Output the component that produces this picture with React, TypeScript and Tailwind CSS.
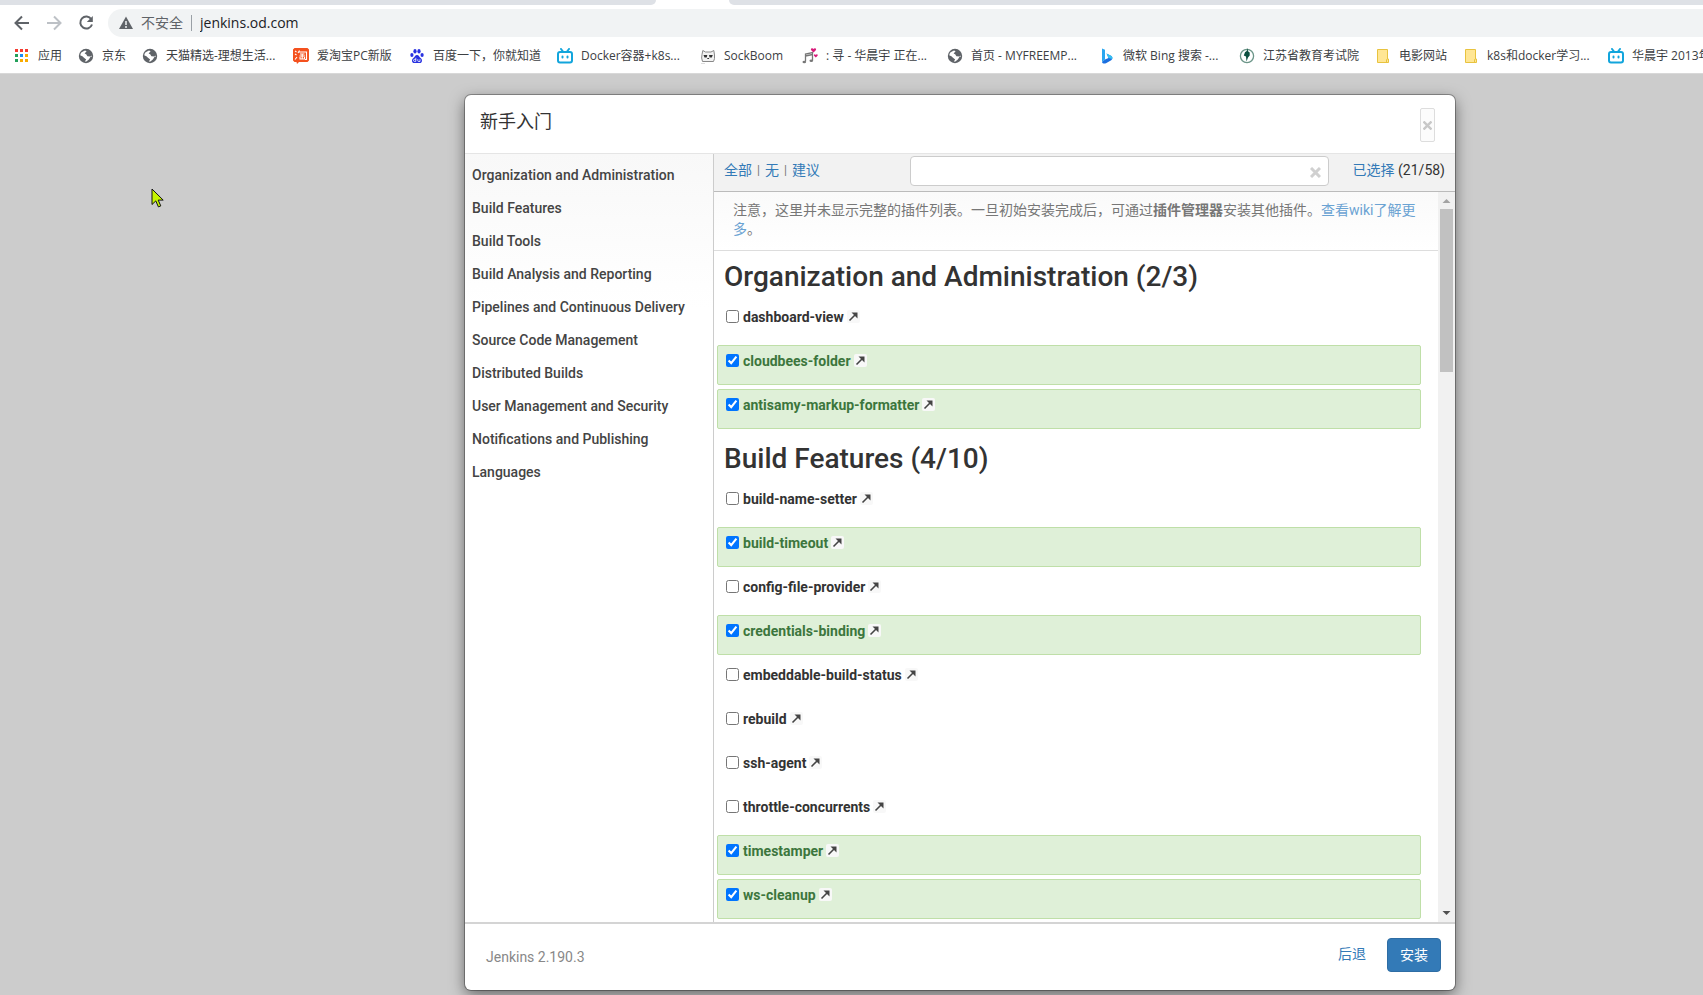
import { useState } from "react";
import type { ReactNode } from "react";
import clsx from "clsx";

const Globe = () => (
  <svg viewBox="0 0 16 16" className="size-4">
    <circle cx="8" cy="8" r="7.2" fill="#5f6368" />
    <path
      d="M8.6 3.2 6.6 5.4 8.2 6.2 9.4 8.2 12.6 8.4 13.6 7.4 13.9 8.6 12.4 9 10.8 11.4 8.4 13.6 6.8 13.4 8.2 11.4 6 9.8 4.4 8.2 2.2 7.2 3 4.8 5 3.6 7 2.4Z"
      fill="#fff"
    />
  </svg>
);

const Apps = () => {
  const colors = ["#f43b30", "#f43b30", "#f43b30", "#22a05a", "#1a8cf4", "#f9ab00", "#22a05a", "#f9ab00", "#f9ab00"];
  return (
    <svg viewBox="0 0 16 16" className="size-4" shapeRendering="crispEdges">
      {colors.map((c, i) => (
        <rect key={i} x={1 + (i % 3) * 5} y={1 + Math.floor(i / 3) * 5} width="3" height="3" fill={c} />
      ))}
    </svg>
  );
};

const Taobao = () => (
  <svg viewBox="0 0 16 16" className="size-4">
    <path d="M1.500 0h13L16 1.500v11L14.500 14H6l-2 2-.5-2h-2L0 12.500v-11Z" fill="#f4511e" />
    <path
      d="M2 3l1.500 1M2 6l1.500 1M2 11.500l2-2.500M6.500 2.500 5 5M6 4h7.500v7.500H12M7 6h4.500M6.500 8h5.500M9.200 6v4.800M7 9v2h4.500V9"
      stroke="#fff"
      strokeWidth="1.100"
      fill="none"
    />
  </svg>
);

const Baidu = () => (
  <svg viewBox="0 0 16 16" className="size-4" fill="#2932e1">
    <ellipse cx="2.900" cy="7" rx="1.600" ry="2" />
    <ellipse cx="6" cy="3.300" rx="1.600" ry="2.200" />
    <ellipse cx="10" cy="3.300" rx="1.600" ry="2.200" />
    <ellipse cx="13.100" cy="7" rx="1.600" ry="2" />
    <path d="M8 7C6 7 5.800 9 4.200 10.200 2.400 11.500 2.600 15 5.200 15h5.600c2.600 0 2.800-3.500 1-4.800C10.200 9 10 7 8 7Z" />
    <path d="M6.800 9.800v3.600H5.400c-1.200 0-1.200-2 0-2h1.400M8.800 11.200v1.600c0 .6.4.7 1 .7h1.200v-2.300" stroke="#fff" strokeWidth=".8" fill="none" />
  </svg>
);

const Bilibili = () => (
  <svg viewBox="0 0 16 16" className="size-4" fill="none" stroke="#12a5dc" strokeWidth="2" strokeLinecap="round">
    <rect x="1" y="4" width="14" height="10.500" rx="2" />
    <path d="M4 1 6 3.500M12 1 10 3.500M5.500 8.500v1M10.500 8.500v1" />
  </svg>
);

const Sock = () => (
  <svg viewBox="0 0 16 16" className="size-4" stroke="#888" fill="none">
    <path d="M2.500 13.500Q1 10 2 6.500L2.800 2.500 5.500 4h5.500L13.800 2.500 14.500 7Q15 11 13.500 13.500Z" fill="#f2f2f2" />
    <path d="M3.500 7h3.800l-.6 2.500H4.500ZM9 7h3.800l-1 2.500H9.600Z" fill="#333" stroke="none" />
    <path d="M7.300 10.500h1.800" stroke="#333" />
    <path d="M1 15.500h4" stroke="#ddd" />
  </svg>
);

const Music = () => (
  <svg viewBox="0 0 16 16" className="size-4">
    <path d="M3.500 13.500V6l7-1.500V12.500M3.500 8l7-1.500" stroke="#777" strokeWidth="1.300" fill="none" />
    <ellipse cx="2.300" cy="14" rx="1.800" ry="1.300" fill="#777" />
    <ellipse cx="9.300" cy="12.800" rx="1.800" ry="1.300" fill="#777" />
    <path d="M11.500 4.500 9 2c-.6-1.500 1.500-2.600 2.500-1C12.500-.6 14.600.5 14 2Z" fill="#d81b7a" />
    <path d="M13.800 9.500 12 7.700c-.5-1.200 1-1.900 1.800-.8.800-1.100 2.300-.4 1.800.8Z" fill="#d81b7a" />
  </svg>
);

const Bing = () => (
  <svg viewBox="0 0 16 16" className="size-4">
    <path d="M3 .5 6 1.800v9.700L3 14Z" fill="#2aa7f0" />
    <path d="M3 14 6 11.500 9.500 10 7.500 5.500 12 7.800c1.800 1 1.800 3.200.2 4.400L7 15.200c-1.800.9-3.600.2-4-1.200Z" fill="#1b6fe0" />
    <path d="M7.500 5.500 12 7.800c1.400.8 1.700 2 1.200 3.200L9.500 10Z" fill="#35c1f1" />
  </svg>
);

const Seal = () => (
  <svg viewBox="0 0 16 16" className="size-4">
    <circle cx="8" cy="8" r="6.600" fill="#fff" stroke="#6b9588" strokeWidth="1.300" />
    <path d="M8.500 0 7.700 3 6 4.200 4.800 7.500 7 8.500l.5 5 1.500-4 1.700-2V4.500L9 3.300Z" fill="#0c5040" />
  </svg>
);

const Folder = () => (
  <svg viewBox="0 0 16 16" className="size-4">
    <path d="M2.500 1.500h10v9.500h1v3.500h-11Z" fill="#ffe694" stroke="#e8c33f" />
    <path d="M11.500 14.500V12l1-1.500" stroke="#e8c33f" fill="none" />
  </svg>
);

const bookmarks: { label: string; icon: ReactNode; width: string }[] = [
  { label: "应用", icon: <Apps />, width: "w-[64px]" },
  { label: "京东", icon: <Globe />, width: "w-[64px]" },
  { label: "天猫精选-理想生活...", icon: <Globe />, width: "w-[151px]" },
  { label: "爱淘宝PC新版", icon: <Taobao />, width: "w-[116px]" },
  { label: "百度一下，你就知道", icon: <Baidu />, width: "w-[148px]" },
  { label: "Docker容器+k8s...", icon: <Bilibili />, width: "w-[143px]" },
  { label: "SockBoom", icon: <Sock />, width: "w-[102px]" },
  { label: ": 寻 - 华晨宇 正在...", icon: <Music />, width: "w-[145px]" },
  { label: "首页 - MYFREEMP...", icon: <Globe />, width: "w-[152px]" },
  { label: "微软 Bing 搜索 -...", icon: <Bing />, width: "w-[140px]" },
  { label: "江苏省教育考试院", icon: <Seal />, width: "w-[136px]" },
  { label: "电影网站", icon: <Folder />, width: "w-[88px]" },
  { label: "k8s和docker学习...", icon: <Folder />, width: "w-[145px]" },
  { label: "华晨宇 2013年", icon: <Bilibili />, width: "w-[140px]" },
];

const categories = [
  "Organization and Administration",
  "Build Features",
  "Build Tools",
  "Build Analysis and Reporting",
  "Pipelines and Continuous Delivery",
  "Source Code Management",
  "Distributed Builds",
  "User Management and Security",
  "Notifications and Publishing",
  "Languages",
];

const groups = [
  {
    title: "Organization and Administration (2/3)",
    plugins: ["dashboard-view", "cloudbees-folder", "antisamy-markup-formatter"],
  },
  {
    title: "Build Features (4/10)",
    plugins: [
      "build-name-setter",
      "build-timeout",
      "config-file-provider",
      "credentials-binding",
      "embeddable-build-status",
      "rebuild",
      "ssh-agent",
      "throttle-concurrents",
      "timestamper",
      "ws-cleanup",
    ],
  },
];

const suggested = [
  "cloudbees-folder",
  "antisamy-markup-formatter",
  "build-timeout",
  "credentials-binding",
  "timestamper",
  "ws-cleanup",
];

const BrowserBar = () => (
  <header className="bg-white border-b border-[#d8d8d8] font-['Open_Sans','Noto_Sans_CJK_SC',sans-serif] text-[#3c4043]">
    <div className="flex h-[5px]">
      <div className="w-[656px] bg-[#dee1e6] rounded-br-md" />
      <div className="w-[73px]" />
      <div className="flex-1 bg-[#dee1e6] rounded-bl-md" />
    </div>
    <div className="flex items-center h-9 pl-3">
      <button aria-label="Back" className="size-5 mr-3">
        <svg viewBox="0 0 20 20" fill="none" stroke="#5f6368" strokeWidth="2">
          <path d="M17 10H4M10 3.500 3.500 10l6.500 6.500" />
        </svg>
      </button>
      <button aria-label="Forward" className="size-5 mr-3">
        <svg viewBox="0 0 20 20" fill="none" stroke="#bdc1c6" strokeWidth="2">
          <path d="M3 10h13M10 3.500l6.500 6.500-6.500 6.500" />
        </svg>
      </button>
      <button aria-label="Reload" className="size-5 mr-3">
        <svg viewBox="0 0 20 20" fill="none" stroke="#5f6368" strokeWidth="2">
          <path d="M15.300 6.200A6 6 0 1 0 16 11.500" />
          <path d="M16.800 3v6h-6Z" fill="#5f6368" stroke="none" />
        </svg>
      </button>
      <div className="flex flex-1 items-center h-7 pl-[11px] rounded-l-full bg-[#f1f3f4] text-sm">
        <svg viewBox="0 0 14 14" className="size-[14px] mr-2">
          <path d="M7 .5 14 13H0Z" fill="#5f6368" />
          <path d="M7 5v4M7 10v2" stroke="#f1f3f4" strokeWidth="1.500" />
        </svg>
        <span className="text-[#5f6368]">不安全</span>
        <span className="w-px h-4 mx-2 bg-[#9aa0a6]" />
        <input
          aria-label="Address"
          defaultValue="jenkins.od.com"
          className="flex-1 bg-transparent text-[#202124] outline-none"
        />
      </div>
    </div>
    <nav className="flex h-8 items-center pb-[2px] pl-[14px] overflow-hidden text-xs">
      {bookmarks.map((b) => (
        <a key={b.label} href="#" className={clsx("flex shrink-0 items-center gap-2 whitespace-nowrap", b.width)}>
          <span className="shrink-0">{b.icon}</span>
          {b.label}
        </a>
      ))}
    </nav>
  </header>
);

const PluginRow = ({ name }: { name: string }) => {
  const [checked, setChecked] = useState<boolean>(suggested.includes(name));

  return (
    <div
      className={clsx(
        "flex items-start gap-[3px] h-10 mb-1 pl-2 pt-1 border rounded-xs",
        checked ? "bg-[#dff0d8] border-[#bfdfa8] text-[#3c763d]" : "border-transparent text-[#333]"
      )}
    >
      <label className="flex items-start gap-1 font-bold leading-[22px]">
        <input
          type="checkbox"
          checked={checked}
          onChange={() => setChecked(!checked)}
          className="mt-1 size-[13px] accent-[#0075ff]"
        />
        {name}
      </label>
      <a href="#" aria-label={`${name} wiki`} className="mt-1 size-[13px] rounded-xs bg-[#f8f8f8]">
        <svg viewBox="0 0 13 13" fill="none" stroke="#444" strokeWidth="1.600">
          <path d="M2.500 10.500 9 4" />
          <path d="M4.500 2.500H10.500V8.500L8.500 6.500 6.500 4.500Z" fill="#444" stroke="none" />
        </svg>
      </a>
    </div>
  );
};

const SetupDialog = () => {
  const [query, setQuery] = useState("");

  return (
    <section className="w-full max-w-[990px] rounded-md bg-white shadow-[0_0_0_1px_rgba(0,0,0,0.3),0_5px_15px_rgba(0,0,0,0.5)]">
      <div className="flex h-[59px] justify-between border-b border-[#e5e5e5] pl-[15px] pr-5 pt-[13px]">
        <h1 className="text-lg leading-7">新手入门</h1>
        <button
          aria-label="Close"
          className="flex h-[34px] w-[15px] items-center justify-center rounded-xs border border-[#ddd] bg-[#fcfcfc] text-[#c8c8c8]"
        >
          <svg viewBox="0 0 9 9" className="size-[9px] shrink-0" stroke="currentColor" strokeWidth="2.400">
            <path d="M.5.5l8 8M8.500.5l-8 8" />
          </svg>
        </button>
      </div>

      <div className="flex">
        <nav className="w-[249px] shrink-0 border-r border-[#ccc] bg-linear-to-b from-[#f8f8f8] to-white to-20% pt-[5px]">
          {categories.map((c) => (
            <a key={c} href="#" className="block h-[33px] pl-[7px] font-medium leading-[33px] text-[#444]">
              {c}
            </a>
          ))}
        </nav>

        <div className="min-w-0 flex-1">
          <div className="flex h-[38px] items-start justify-between border-b border-[#bbb] bg-[#f2f2f2] px-[10px]">
            <div className="flex w-[186px] gap-[5px] leading-8 text-[#777]">
              <a href="#" className="text-[#337ab7]">全部</a>
              <span className="text-xs leading-8">|</span>
              <a href="#" className="text-[#337ab7]">无</a>
              <span className="text-xs leading-8">|</span>
              <a href="#" className="text-[#337ab7]">建议</a>
            </div>
            <div className="relative mt-[2px] flex-1">
              <input
                type="text"
                aria-label="Filter plugins"
                value={query}
                onChange={(e) => setQuery(e.target.value)}
                className="h-[30px] w-full rounded-sm border border-[#ccc] bg-white px-3 outline-none"
              />
              <button aria-label="Clear" onClick={() => setQuery("")} className="absolute right-2 top-[11px] text-[#d0d0d0]">
                <svg viewBox="0 0 11 11" className="size-[11px]" stroke="currentColor" strokeWidth="3">
                  <path d="M1 1l9 9M10 1l-9 9" />
                </svg>
              </button>
            </div>
            <div className="w-[116px] text-right leading-8">
              <a href="#" className="text-[#337ab7]">已选择</a> (21/58)
            </div>
          </div>

          <div className="flex h-[730px]">
            <div className="min-w-0 flex-1 overflow-hidden">
              <p className="h-[59px] border-b border-[#ddd] bg-linear-to-b from-[#fafafa] to-white px-[19px] pt-[9px] leading-[19px] text-[#777]">
                注意，这里并未显示完整的插件列表。一旦初始安装完成后，可通过
                <b>插件管理器</b>安装其他插件。
                <a href="#" className="text-[#6ba3d3]">查看wiki了解更多</a>。
              </p>
              {groups.map((g) => (
                <div key={g.title} className="pl-[3px] pr-[17px]">
                  <h2 className="h-[50px] pl-[7px] text-[28px] font-medium leading-[52px]">{g.title}</h2>
                  {g.plugins.map((p) => (
                    <PluginRow key={p} name={p} />
                  ))}
                </div>
              ))}
            </div>
            <div className="flex w-[17px] flex-col items-center bg-[#f1f1f1]">
              <svg viewBox="0 0 17 17" className="size-[17px]">
                <path d="M4.500 11 8.500 7l4 4Z" fill="#a3a3a3" />
              </svg>
              <div className="h-[163px] w-[13px] bg-[#c1c1c1]" />
              <svg viewBox="0 0 17 17" className="mt-auto size-[17px]">
                <path d="M4.500 6 8.500 10l4-4Z" fill="#505050" />
              </svg>
            </div>
          </div>
        </div>
      </div>

      <div className="flex h-[68px] items-start border-t-2 border-[#d4d4d4] pl-[21px] pr-[14px] pt-[14px] leading-8">
        <span className="flex-1 pt-[3px] text-[#888]">Jenkins 2.190.3</span>
        <button className="mr-[21px] text-[#337ab7]">后退</button>
        <button className="h-[34px] rounded-sm border border-[#2e6da4] bg-[#337ab7] px-3 text-white">安装</button>
      </div>
    </section>
  );
};

const App = () => (
  <div className="relative min-h-screen overflow-hidden bg-[#ccc] font-[Roboto,'Noto_Sans_CJK_SC',sans-serif] text-sm text-[#333]">
    <BrowserBar />
    <main className="pl-[465px] pt-[21px] pb-[5px]">
      <SetupDialog />
    </main>
    <svg viewBox="0 0 14 20" className="absolute left-[151px] top-[188px] h-5 w-[14px]">
      <path d="M1 1v15.500l3.800-3.600 2.600 6 2.400-1-2.600-5.800h5Z" fill="#c6f500" stroke="#111" />
    </svg>
  </div>
);

export default App;
